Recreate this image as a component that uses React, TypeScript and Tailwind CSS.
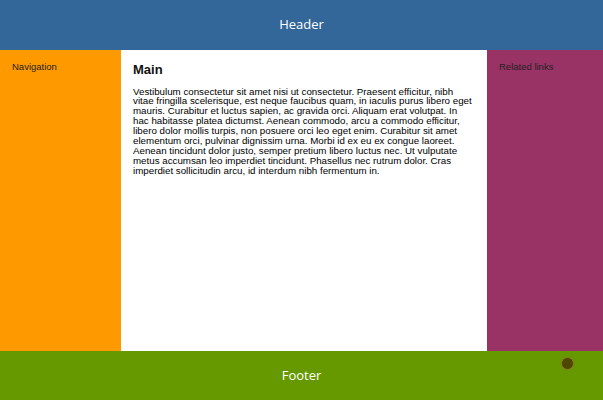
export default function App() {
  return (
    <div className="flex h-[400px] w-[603px] flex-col font-['Liberation_Sans',Arial,sans-serif]">
      <header className="flex h-[50px] shrink-0 items-center justify-center bg-[#336699] font-['Open_Sans',sans-serif] text-[13px] text-white">
        Header
      </header>
      <div className="flex flex-1">
        <nav className="w-[121px] shrink-0 bg-[#ff9900] px-3 pt-[10px] text-[9.5px] text-[#222]">
          Navigation
        </nav>
        <main className="flex-1 bg-white px-3 pt-[10px] text-black">
          <h1 className="text-[13px] font-bold text-[#111]">Main</h1>
          <p className="mt-[7px] text-[9.75px] leading-[9.9px]">
            Vestibulum consectetur sit amet nisi ut consectetur. Praesent efficitur, nibh vitae fringilla
            scelerisque, est neque faucibus quam, in iaculis purus libero eget mauris. Curabitur et luctus
            sapien, ac gravida orci. Aliquam erat volutpat. In hac habitasse platea dictumst. Aenean commodo,
            arcu a commodo efficitur, libero dolor mollis turpis, non posuere orci leo eget enim. Curabitur
            sit amet elementum orci, pulvinar dignissim urna. Morbi id ex eu ex congue laoreet. Aenean
            tincidunt dolor justo, semper pretium libero luctus nec. Ut vulputate metus accumsan leo
            imperdiet tincidunt. Phasellus nec rutrum dolor. Cras imperdiet sollicitudin arcu, id interdum
            nibh fermentum in.
          </p>
        </main>
        <aside className="w-[116px] shrink-0 bg-[#993366] px-3 pt-[10px] text-[9.5px] text-[#222]">
          Related links
        </aside>
      </div>
      <footer className="relative flex h-[49px] shrink-0 items-center justify-center bg-[#669900] font-['Open_Sans',sans-serif] text-[13px] text-white">
        Footer
        <span className="absolute left-[561px] top-[6px] h-[13px] w-[13px] rounded-full border border-[#8a7a2a] bg-[#4d4700]" />
      </footer>
    </div>
  );
}
